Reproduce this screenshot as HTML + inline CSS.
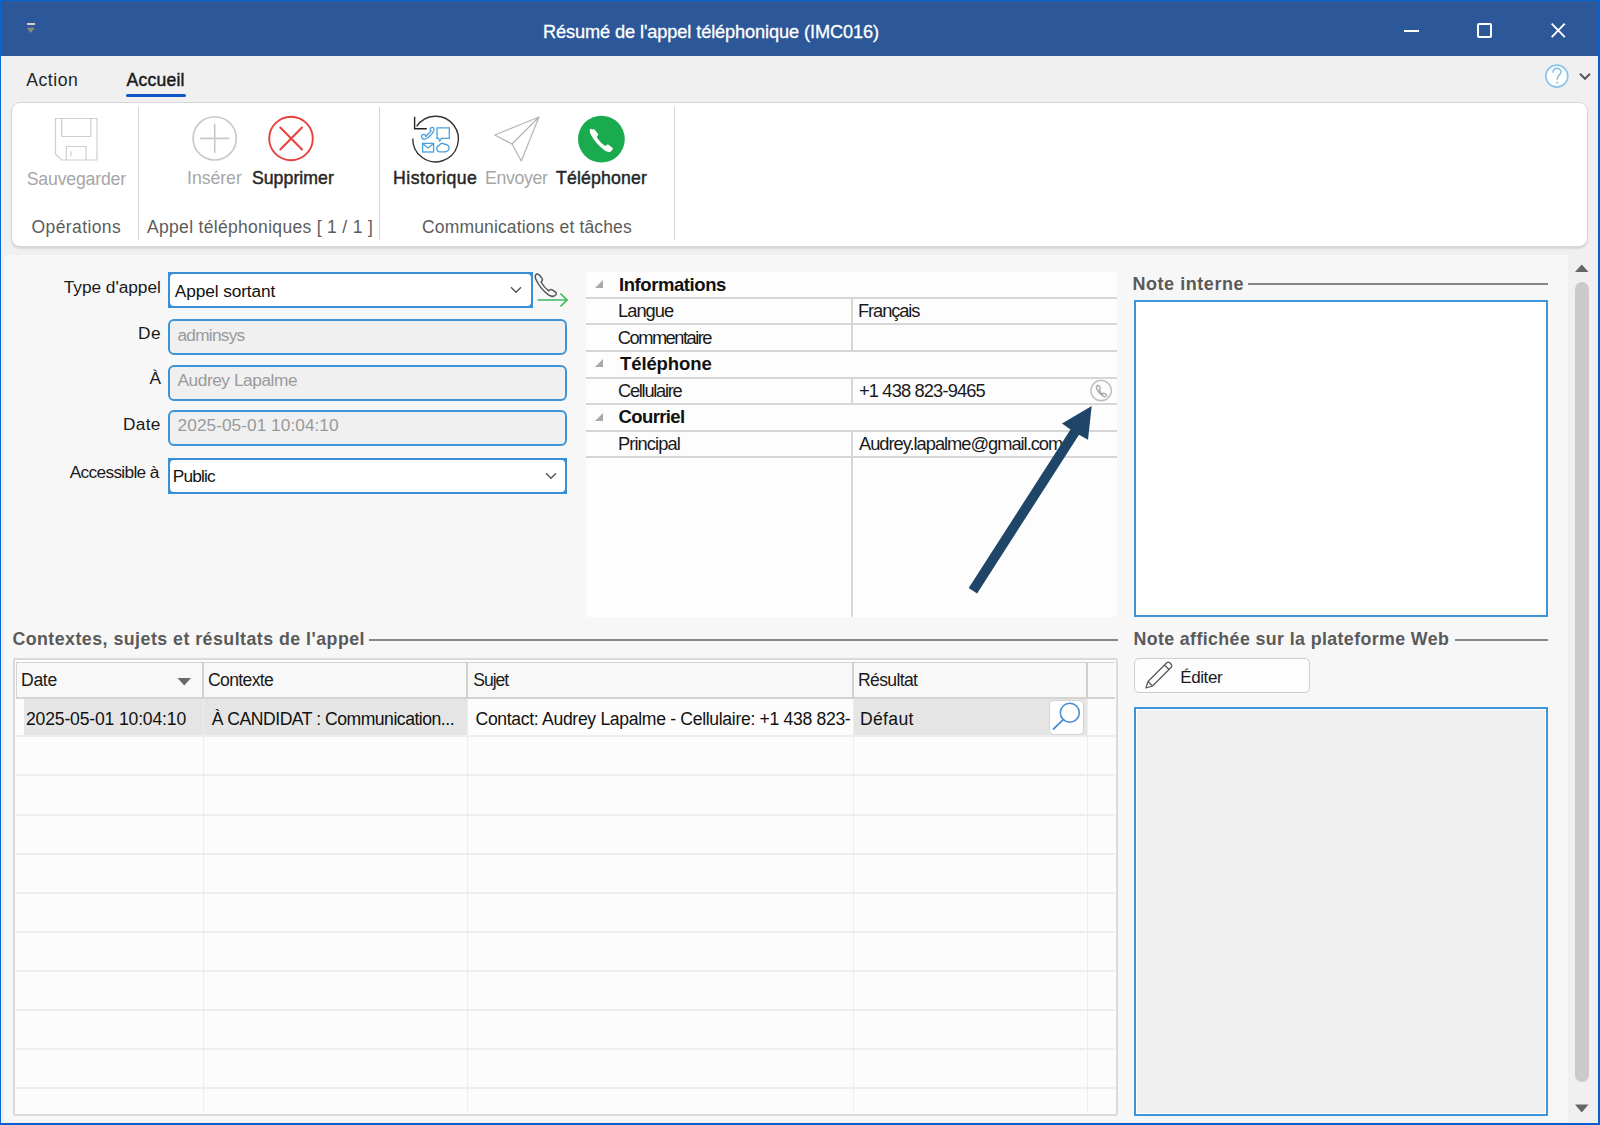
<!DOCTYPE html>
<html><head><meta charset="utf-8"><style>
html,body{margin:0;padding:0;}
body{width:1600px;height:1125px;position:relative;overflow:hidden;background:#f0f0f0;font-family:"Liberation Sans", sans-serif;}
.a{position:absolute;box-sizing:border-box;}
.tx{position:absolute;white-space:pre;line-height:0;height:0;}
.bm{display:inline-block;width:0;height:0;}
</style></head><body>
<!-- window frame -->
<div class="a" style="left:0;top:0;width:1600px;height:56px;background:#2c5899"></div>
<div class="a" style="left:0;top:0;width:1600px;height:1px;background:#0866d4"></div>
<div class="a" style="left:0;top:0;width:1px;height:1125px;background:#0866d4"></div>
<div class="a" style="left:1598px;top:0;width:2px;height:1125px;background:#0a5fd0"></div>
<div class="a" style="left:0;top:1123px;width:1600px;height:2px;background:#0a5fd0"></div>
<!-- quick access icon -->
<div class="a" style="left:27px;top:23px;width:7.5px;height:2px;background:#d8cfc0"></div>
<svg class="a" style="left:26px;top:27px" width="10" height="9"><polygon points="0.8,0.8 8.8,0.8 4.8,6" fill="#8a8a80"/></svg>
<!-- window controls -->
<div class="a" style="left:1404px;top:30px;width:15px;height:2px;background:#fff"></div>
<div class="a" style="left:1477px;top:23px;width:15px;height:15px;border:2px solid #fff;border-radius:2px"></div>
<svg class="a" style="left:1549px;top:22px" width="18" height="18"><path d="M2.7 1.7 L15.8 15.2 M15.8 1.7 L2.7 15.2" stroke="#fff" stroke-width="1.9"/></svg>
<!-- ribbon background -->
<div class="a" style="left:1px;top:56px;width:1597px;height:199px;background:#f0f0f0"></div>
<!-- tab underline -->
<div class="a" style="left:126px;top:94px;width:60px;height:3px;background:#0b55c6;border-radius:2px"></div>
<!-- help icon -->
<svg class="a" style="left:1540px;top:60px" width="56" height="34">
  <circle cx="16.8" cy="16.1" r="11" fill="#fff" stroke="#8fc3e6" stroke-width="1.6"/>
  <path d="M13 12.3 C13 9.5 15 8.4 17 8.4 C19.3 8.4 21 10 21 12 C21 14.6 17.3 15.2 17.3 18.5 L17.3 19.3" fill="none" stroke="#8fc3e6" stroke-width="1.6" stroke-linecap="round"/>
  <circle cx="17.2" cy="22.6" r="1.1" fill="#8fc3e6"/>
  <path d="M40 13.8 L45 18.8 L50 13.8" fill="none" stroke="#555" stroke-width="2"/>
</svg>
<!-- ribbon card -->
<div class="a" style="left:11px;top:102px;width:1577px;height:145px;background:#fff;border:1px solid #d6d6d6;border-radius:9px;box-shadow:0 2px 2px rgba(0,0,0,0.10)"></div>
<div class="a" style="left:137.5px;top:107px;width:1.5px;height:133px;background:#d4d4d4"></div>
<div class="a" style="left:378.5px;top:107px;width:1.5px;height:133px;background:#d4d4d4"></div>
<div class="a" style="left:673.5px;top:107px;width:1.5px;height:133px;background:#d4d4d4"></div>
<!-- ribbon icons -->
<svg class="a" style="left:0;top:100px;overflow:visible" width="700" height="80">
  <!-- save -->
  <g fill="none" stroke="#cfcfcf" stroke-width="1.2" transform="translate(0,-100)">
    <path d="M55.5 118.5 L97 118.5 L97 160 L61.5 160 L55.5 154 Z"/>
    <path d="M61.8 118.5 L61.8 136.5 L90.8 136.5 L90.8 118.5"/>
    <path d="M66.3 160 L66.3 146.5 L86 146.5 L86 160"/>
    <path d="M70.9 151 L70.9 156.5"/>
  </g>
  <g transform="translate(0,-100)">
  <!-- insert -->
  <circle cx="214.7" cy="138.4" r="21.6" fill="none" stroke="#c8c8c8" stroke-width="1.6"/>
  <path d="M200 138.4 H229.3 M214.7 123.7 V153" stroke="#c8c8c8" stroke-width="1.6"/>
  <!-- delete -->
  <circle cx="291" cy="138.5" r="21.8" fill="none" stroke="#e8403d" stroke-width="1.9"/>
  <path d="M280.3 127.5 L302 149.5 M302 127.5 L280.3 149.5" stroke="#e8403d" stroke-width="2" stroke-linecap="round"/>
  <!-- historique -->
  <path d="M412.8 138.4 A22.8 22.8 0 1 0 416.6 126.4" fill="none" stroke="#333" stroke-width="1.4"/>
  <path d="M414.6 116.8 L414.6 128.8 L426.8 128.8" fill="none" stroke="#222" stroke-width="1.4"/>
  <g fill="none" stroke="#4b9fdc" stroke-width="1.3">
    <path d="M437 127.8 H449.3 V138.4 H441.5 L439.8 141 L438.6 138.4 H437 Z"/>
    <rect x="422.6" y="143.4" width="11" height="8.6"/>
    <path d="M422.6 143.6 L428.1 148 L433.6 143.6"/>
    <path d="M437.3 150.5 C436 148 437 146 439 145.5 C440.5 143.3 442.5 142.5 444 144 C446.5 144.3 449 145.5 449 148 C449 150 447.5 151.5 445 151.8 L439.5 151.8 C438.2 151.8 437.5 151.2 437.3 150.5 Z"/>
    <path d="M422 138 C421 137 421.2 135.2 423 134.6 C425 134 426 135.5 425.5 136.8 L431 131 C429.8 130.5 429.8 128.5 431.3 127.6 C432.8 126.8 434.3 128 434 129.8 C433.5 133 429 137.5 425.5 139 C424 139.6 422.8 139 422 138 Z"/>
  </g>
  <!-- envoyer -->
  <path d="M539 117 L494.8 135 L512 144 Z M512 144 L521.3 161 L539 117" fill="none" stroke="#b4b4b4" stroke-width="1.2" stroke-linejoin="round"/>
  <!-- telephoner -->
  <circle cx="601.4" cy="139.1" r="23.4" fill="#1bab4f"/>
  <path d="M590.5 128.8 C589.2 130 589.5 132.3 590.8 134.5 C594 140.5 598.5 146 604.5 150.3 C606.8 151.9 609.3 152.5 610.8 151.4 L612.3 150 C613 149.3 612.9 148.3 612.1 147.6 L608.8 144.9 C608 144.3 607.1 144.4 606.4 145 L605.3 146 C601.8 143.8 598.8 140.5 596.6 137 L597.6 135.8 C598.2 135.1 598.3 134.1 597.7 133.4 L595 130 C594.3 129.2 593.3 129 592.5 129.6 Z" fill="#fff"/>
  </g>
</svg>
<!-- form panel -->
<div class="a" style="left:4px;top:255px;width:1564px;height:867px;background:#f7f7f7"></div>
<!-- scrollbar -->
<div class="a" style="left:1568px;top:255px;width:30px;height:868px;background:#f0f0f0"></div>
<svg class="a" style="left:1574px;top:263px" width="16" height="10"><polygon points="1,9 14.5,9 7.75,1.5" fill="#666"/></svg>
<div class="a" style="left:1575px;top:281.5px;width:14px;height:800px;background:#cacaca;border-radius:7px"></div>
<svg class="a" style="left:1574px;top:1104px" width="16" height="10"><polygon points="1,0.5 14.5,0.5 7.75,8.5" fill="#666"/></svg>
<!-- inputs -->
<div class="a" style="left:168px;top:272px;width:365px;height:36px;background:#3a8fd6"></div><div class="a" style="left:170px;top:274px;width:361px;height:32px;background:#fff;border-radius:4px"></div>
<svg class="a" style="left:508px;top:284px" width="16" height="12"><path d="M3 3.2 L8 8.2 L13 3.2" fill="none" stroke="#555" stroke-width="1.4"/></svg>
<div class="a" style="left:168px;top:319px;width:399px;height:36px;background:#f0f0f0;border:2px solid #3b95d8;border-radius:6px"></div>
<div class="a" style="left:168px;top:364.5px;width:399px;height:36px;background:#f0f0f0;border:2px solid #3b95d8;border-radius:6px"></div>
<div class="a" style="left:168px;top:410px;width:399px;height:36px;background:#f0f0f0;border:2px solid #3b95d8;border-radius:6px"></div>
<div class="a" style="left:168px;top:458px;width:399px;height:36px;background:#3a8fd6"></div><div class="a" style="left:170px;top:460px;width:395px;height:32px;background:#fff;border-radius:4px"></div>
<svg class="a" style="left:543px;top:470px" width="16" height="12"><path d="M3 3.2 L8 8.2 L13 3.2" fill="none" stroke="#555" stroke-width="1.4"/></svg>
<!-- phone + arrow icon -->
<svg class="a" style="left:530px;top:268px" width="42" height="44">
  <path d="M6.5 6 C5 7.3 5 9.5 6 11.5 C8.5 17 12.5 22.5 18.5 26.8 C20.8 28.3 23.3 28.8 24.8 27.7 L25.8 26.8 C26.6 26 26.4 24.8 25.5 24.2 L22.2 21.8 C21.3 21.2 20.3 21.4 19.6 22 L18.8 22.8 C15.6 20.6 12.8 17.3 11 14 L11.9 13 C12.6 12.2 12.6 11.1 12 10.4 L9.6 7.2 C8.9 6.3 7.6 5.9 6.5 6 Z" fill="none" stroke="#555" stroke-width="1.5"/>
  <path d="M7.5 32 H36.5 M30.5 25.5 L37 32 L30.5 38.5" fill="none" stroke="#3dba62" stroke-width="1.7"/>
</svg>
<!-- property grid -->
<div class="a" style="left:586px;top:272px;width:531px;height:345px;background:#fdfdfd"></div>
<div class="a" style="left:586px;top:297px;width:531px;height:2px;background:#d6d6d6"></div>
<div class="a" style="left:586px;top:323px;width:531px;height:2px;background:#d6d6d6"></div>
<div class="a" style="left:586px;top:350px;width:531px;height:2px;background:#d6d6d6"></div>
<div class="a" style="left:586px;top:376.5px;width:531px;height:2px;background:#d6d6d6"></div>
<div class="a" style="left:586px;top:403px;width:531px;height:2px;background:#d6d6d6"></div>
<div class="a" style="left:586px;top:429.5px;width:531px;height:2px;background:#d6d6d6"></div>
<div class="a" style="left:586px;top:456px;width:531px;height:2px;background:#d6d6d6"></div>
<div class="a" style="left:851px;top:299px;width:2px;height:24px;background:#d6d6d6"></div>
<div class="a" style="left:851px;top:325px;width:2px;height:25px;background:#d6d6d6"></div>
<div class="a" style="left:851px;top:378.5px;width:2px;height:24.5px;background:#d6d6d6"></div>
<div class="a" style="left:851px;top:431.5px;width:2px;height:185.5px;background:#d6d6d6"></div>
<svg class="a" style="left:590px;top:275px" width="20" height="160">
  <polygon points="5,13 13,13 13,5" fill="#a8a8a8"/>
  <polygon points="5,92 13,92 13,84" fill="#a8a8a8"/>
  <polygon points="5,146 13,146 13,138" fill="#a8a8a8"/>
</svg>
<svg class="a" style="left:1088px;top:378px" width="26" height="26">
  <circle cx="13.1" cy="12.6" r="10.2" fill="none" stroke="#bdbdbd" stroke-width="1.4"/>
  <path d="M9.3 7.5 C8.3 8.2 8.2 9.8 9 11.5 C10.3 14.3 12.5 16.7 15.5 18.3 C16.8 19 18.2 18.6 18.5 17.8 C18.8 16.8 18 16 17 15.6 C16 15.2 15 15.5 14.5 16 C13 14.8 12 13.5 11.3 12 C12 11.5 12.3 10.5 12 9.5 C11.6 8.2 10.3 7 9.3 7.5 Z" fill="none" stroke="#ababab" stroke-width="1.5"/>
</svg>
<!-- note interne -->
<div class="a" style="left:1248px;top:283px;width:300px;height:2px;background:#868686"></div>
<div class="a" style="left:1134px;top:300px;width:414px;height:317px;background:#fff;border:2px solid #3b95d8"></div>
<!-- section lines -->
<div class="a" style="left:368.5px;top:639px;width:749.5px;height:2px;background:#868686"></div>
<div class="a" style="left:1455px;top:639px;width:93px;height:2px;background:#868686"></div>
<!-- editer button -->
<div class="a" style="left:1134px;top:658px;width:176px;height:35px;background:#fdfdfd;border:1px solid #cdcdcd;border-radius:5px"></div>
<svg class="a" style="left:1140px;top:658px" width="40" height="36">
  <path d="M6 30 L8 23.5 L26.5 5 C27.5 4 29 4 30 5 L31 6 C32 7 32 8.5 31 9.5 L12.5 28 Z M8 23.5 L12.5 28 M24.5 7 L29 11.5" fill="none" stroke="#555" stroke-width="1.2" stroke-linejoin="round"/>
</svg>
<!-- web note box -->
<div class="a" style="left:1134px;top:707px;width:414px;height:409px;background:#f0f0f0;border:2px solid #3b95d8;box-shadow:inset 0 0 0 1px #fff"></div>
<!-- table -->
<div class="a" style="left:13px;top:658px;width:1105px;height:458px;background:#fcfcfc;border:2px solid #dadada;border-radius:2px"></div>
<div class="a" style="left:16px;top:662px;width:1099px;height:36px;background:#f8f8f8;border-top:1.5px solid #d4d4d4;border-left:1.5px solid #d4d4d4"></div>
<div class="a" style="left:16px;top:697px;width:1099px;height:2px;background:#d4d4d4"></div>
<div class="a" style="left:202px;top:662px;width:2px;height:36px;background:#cfcfcf"></div>
<div class="a" style="left:466px;top:662px;width:2px;height:36px;background:#cfcfcf"></div>
<div class="a" style="left:852px;top:662px;width:2px;height:36px;background:#cfcfcf"></div>
<div class="a" style="left:1086px;top:662px;width:2px;height:36px;background:#cfcfcf"></div>
<svg class="a" style="left:176px;top:676px" width="18" height="12"><polygon points="1.5,2 15,2 8.25,9.5" fill="#6a6a6a"/></svg>
<!-- row 1 highlight -->
<div class="a" style="left:24px;top:699px;width:179px;height:37.5px;background:#e5e5e5"></div>
<div class="a" style="left:204px;top:699px;width:263px;height:37.5px;background:#e5e5e5"></div>
<div class="a" style="left:854px;top:699px;width:233px;height:37.5px;background:#e5e5e5"></div>
<!-- grid lines -->
<div class="a" style="left:16px;top:735.3px;width:1099px;height:2px;background:#eeeeee"></div>
<div class="a" style="left:16px;top:774.4px;width:1099px;height:2px;background:#eeeeee"></div>
<div class="a" style="left:16px;top:813.5px;width:1099px;height:2px;background:#eeeeee"></div>
<div class="a" style="left:16px;top:852.6px;width:1099px;height:2px;background:#eeeeee"></div>
<div class="a" style="left:16px;top:891.7px;width:1099px;height:2px;background:#eeeeee"></div>
<div class="a" style="left:16px;top:930.8px;width:1099px;height:2px;background:#eeeeee"></div>
<div class="a" style="left:16px;top:969.9px;width:1099px;height:2px;background:#eeeeee"></div>
<div class="a" style="left:16px;top:1009.0px;width:1099px;height:2px;background:#eeeeee"></div>
<div class="a" style="left:16px;top:1048.1px;width:1099px;height:2px;background:#eeeeee"></div>
<div class="a" style="left:16px;top:1087.2px;width:1099px;height:2px;background:#eeeeee"></div>
<div class="a" style="left:202.5px;top:699px;width:1.5px;height:413px;background:#eeeeee"></div>
<div class="a" style="left:466.5px;top:699px;width:1.5px;height:413px;background:#eeeeee"></div>
<div class="a" style="left:852.5px;top:699px;width:1.5px;height:413px;background:#eeeeee"></div>
<div class="a" style="left:1086.5px;top:699px;width:1.5px;height:413px;background:#eeeeee"></div>
<div class="a" style="left:1049px;top:700px;width:35px;height:35px;background:#fff;border:1px solid #d4d4d4;border-radius:5px"></div>
<svg class="a" style="left:1049px;top:700px" width="36" height="36"><circle cx="20.8" cy="12.7" r="9.5" fill="none" stroke="#4a8fd0" stroke-width="1.6"/><path d="M14.2 19.6 L4.5 29" stroke="#4a8fd0" stroke-width="1.8" stroke-linecap="round"/></svg>

<div class="tx" id="t0" style="left:543.00px;top:31.50px;font-size:18.2px;font-weight:normal;color:#ffffff;letter-spacing:-0.108px;-webkit-text-stroke:0.3px #ffffff"><span class="bm"></span>Résumé de l'appel téléphonique (IMC016)</div>
<div class="tx" id="t1" style="left:26.30px;top:80.00px;font-size:17.6px;font-weight:normal;color:#262626;letter-spacing:0.517px"><span class="bm"></span>Action</div>
<div class="tx" id="t2" style="left:126.50px;top:80.00px;font-size:17.6px;font-weight:normal;color:#1a1a1a;letter-spacing:0.199px;-webkit-text-stroke:0.45px #1a1a1a"><span class="bm"></span>Accueil</div>
<div class="tx" id="t3" style="left:26.75px;top:178.71px;font-size:17.7px;font-weight:normal;color:#a6a6a6;letter-spacing:-0.194px"><span class="bm"></span>Sauvegarder</div>
<div class="tx" id="t4" style="left:187.10px;top:178.41px;font-size:17.7px;font-weight:normal;color:#a6a6a6;letter-spacing:-0.060px"><span class="bm"></span>Insérer</div>
<div class="tx" id="t5" style="left:251.90px;top:178.41px;font-size:17.7px;font-weight:normal;color:#262626;letter-spacing:0.050px;-webkit-text-stroke:0.45px #262626"><span class="bm"></span>Supprimer</div>
<div class="tx" id="t6" style="left:393.00px;top:178.41px;font-size:17.7px;font-weight:normal;color:#262626;letter-spacing:0.468px;-webkit-text-stroke:0.45px #262626"><span class="bm"></span>Historique</div>
<div class="tx" id="t7" style="left:485.00px;top:178.41px;font-size:17.7px;font-weight:normal;color:#a6a6a6;letter-spacing:-0.333px"><span class="bm"></span>Envoyer</div>
<div class="tx" id="t8" style="left:556.00px;top:178.41px;font-size:17.7px;font-weight:normal;color:#262626;letter-spacing:0.156px;-webkit-text-stroke:0.45px #262626"><span class="bm"></span>Téléphoner</div>
<div class="tx" id="t9" style="left:31.60px;top:226.91px;font-size:17.5px;font-weight:normal;color:#5c5c5c;letter-spacing:0.383px"><span class="bm"></span>Opérations</div>
<div class="tx" id="t10" style="left:147.00px;top:227.11px;font-size:17.5px;font-weight:normal;color:#5c5c5c;letter-spacing:0.314px"><span class="bm"></span>Appel téléphoniques [ 1 / 1 ]</div>
<div class="tx" id="t11" style="left:422.00px;top:227.00px;font-size:17.5px;font-weight:normal;color:#5c5c5c;letter-spacing:0.154px"><span class="bm"></span>Communications et tâches</div>
<div class="tx" id="t12" style="left:63.75px;top:286.75px;font-size:17.3px;font-weight:normal;color:#1a1a1a;letter-spacing:-0.034px"><span class="bm"></span>Type d'appel</div>
<div class="tx" id="t13" style="left:138.00px;top:333.00px;font-size:17.3px;font-weight:normal;color:#1a1a1a;letter-spacing:0.520px"><span class="bm"></span>De</div>
<div class="tx" id="t14" style="left:149.40px;top:378.41px;font-size:17.3px;font-weight:normal;color:#1a1a1a;letter-spacing:0.000px"><span class="bm"></span>À</div>
<div class="tx" id="t15" style="left:123.00px;top:424.30px;font-size:17.3px;font-weight:normal;color:#1a1a1a;letter-spacing:0.269px"><span class="bm"></span>Date</div>
<div class="tx" id="t16" style="left:69.70px;top:471.80px;font-size:17.3px;font-weight:normal;color:#1a1a1a;letter-spacing:-0.673px"><span class="bm"></span>Accessible à</div>
<div class="tx" id="t17" style="left:174.75px;top:290.91px;font-size:17.3px;font-weight:normal;color:#111111;letter-spacing:-0.098px"><span class="bm"></span>Appel sortant</div>
<div class="tx" id="t18" style="left:177.50px;top:334.61px;font-size:17.3px;font-weight:normal;color:#9a9a9a;letter-spacing:-0.750px"><span class="bm"></span>adminsys</div>
<div class="tx" id="t19" style="left:177.50px;top:380.00px;font-size:17.3px;font-weight:normal;color:#9a9a9a;letter-spacing:-0.449px"><span class="bm"></span>Audrey Lapalme</div>
<div class="tx" id="t20" style="left:177.60px;top:425.00px;font-size:17.3px;font-weight:normal;color:#9a9a9a;letter-spacing:0.030px"><span class="bm"></span>2025-05-01 10:04:10</div>
<div class="tx" id="t21" style="left:172.80px;top:476.30px;font-size:17.3px;font-weight:normal;color:#111111;letter-spacing:-0.845px"><span class="bm"></span>Public</div>
<div class="tx" id="t22" style="left:619.00px;top:285.00px;font-size:18.5px;font-weight:bold;color:#111111;letter-spacing:-0.431px"><span class="bm"></span>Informations</div>
<div class="tx" id="t23" style="left:618.00px;top:311.00px;font-size:18.3px;font-weight:normal;color:#1a1a1a;letter-spacing:-0.967px"><span class="bm"></span>Langue</div>
<div class="tx" id="t24" style="left:858.00px;top:311.00px;font-size:18.3px;font-weight:normal;color:#1a1a1a;letter-spacing:-1.094px"><span class="bm"></span>Français</div>
<div class="tx" id="t25" style="left:617.80px;top:337.50px;font-size:18.3px;font-weight:normal;color:#1a1a1a;letter-spacing:-1.506px"><span class="bm"></span>Commentaire</div>
<div class="tx" id="t26" style="left:620.00px;top:364.00px;font-size:18.5px;font-weight:bold;color:#111111;letter-spacing:-0.103px"><span class="bm"></span>Téléphone</div>
<div class="tx" id="t27" style="left:618.00px;top:390.71px;font-size:18.3px;font-weight:normal;color:#1a1a1a;letter-spacing:-1.271px"><span class="bm"></span>Cellulaire</div>
<div class="tx" id="t28" style="left:859.00px;top:390.71px;font-size:18.3px;font-weight:normal;color:#1a1a1a;letter-spacing:-0.857px"><span class="bm"></span>+1 438 823-9465</div>
<div class="tx" id="t29" style="left:618.60px;top:416.80px;font-size:18.5px;font-weight:bold;color:#111111;letter-spacing:-0.627px"><span class="bm"></span>Courriel</div>
<div class="tx" id="t30" style="left:618.00px;top:443.71px;font-size:18.3px;font-weight:normal;color:#1a1a1a;letter-spacing:-0.918px"><span class="bm"></span>Principal</div>
<div class="tx" id="t31" style="left:859.00px;top:443.71px;font-size:18.3px;font-weight:normal;color:#1a1a1a;letter-spacing:-1.013px"><span class="bm"></span>Audrey.lapalme@gmail.com</div>
<div class="tx" id="t32" style="left:1132.50px;top:283.50px;font-size:18.0px;font-weight:bold;color:#5a5a5a;letter-spacing:0.545px"><span class="bm"></span>Note interne</div>
<div class="tx" id="t33" style="left:12.40px;top:639.11px;font-size:17.8px;font-weight:bold;color:#5a5a5a;letter-spacing:0.471px"><span class="bm"></span>Contextes, sujets et résultats de l'appel</div>
<div class="tx" id="t34" style="left:1133.40px;top:639.00px;font-size:17.8px;font-weight:bold;color:#5a5a5a;letter-spacing:0.395px"><span class="bm"></span>Note affichée sur la plateforme Web</div>
<div class="tx" id="t35" style="left:1180.25px;top:677.50px;font-size:17.0px;font-weight:normal;color:#1a1a1a;letter-spacing:-0.400px"><span class="bm"></span>Éditer</div>
<div class="tx" id="t36" style="left:21.00px;top:679.71px;font-size:17.6px;font-weight:normal;color:#1a1a1a;letter-spacing:-0.326px"><span class="bm"></span>Date</div>
<div class="tx" id="t37" style="left:208.00px;top:680.00px;font-size:17.6px;font-weight:normal;color:#1a1a1a;letter-spacing:-0.662px"><span class="bm"></span>Contexte</div>
<div class="tx" id="t38" style="left:473.30px;top:680.00px;font-size:17.6px;font-weight:normal;color:#1a1a1a;letter-spacing:-1.053px"><span class="bm"></span>Sujet</div>
<div class="tx" id="t39" style="left:858.00px;top:680.00px;font-size:17.6px;font-weight:normal;color:#1a1a1a;letter-spacing:-0.665px"><span class="bm"></span>Résultat</div>
<div class="tx" id="t40" style="left:26.00px;top:719.00px;font-size:17.6px;font-weight:normal;color:#111111;letter-spacing:-0.177px"><span class="bm"></span>2025-05-01 10:04:10</div>
<div class="tx" id="t41" style="left:211.70px;top:719.00px;font-size:17.6px;font-weight:normal;color:#111111;letter-spacing:-0.486px"><span class="bm"></span>À CANDIDAT : Communication...</div>
<div class="tx" id="t42" style="left:475.50px;top:719.00px;font-size:17.6px;font-weight:normal;color:#111111;letter-spacing:-0.323px"><span class="bm"></span>Contact: Audrey Lapalme - Cellulaire: +1 438 823-</div>
<div class="tx" id="t43" style="left:860.00px;top:719.00px;font-size:17.6px;font-weight:normal;color:#111111;letter-spacing:0.310px"><span class="bm"></span>Défaut</div>
<!-- big arrow -->
<svg class="a" style="left:0;top:0;pointer-events:none" width="1600" height="1125">
<polygon points="968.7,588 977.1,593.4 1079,434.8 1088,439.8 1091.7,406 1062,423.5 1070.5,429.5" fill="#1f4669"/>
</svg>


</body></html>
